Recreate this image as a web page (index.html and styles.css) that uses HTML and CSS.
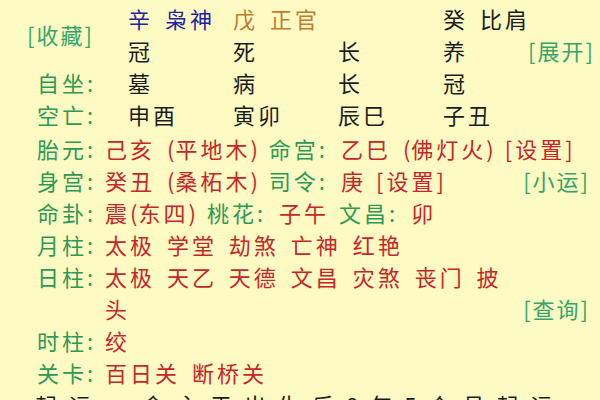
FILE: index.html
```html
<!DOCTYPE html>
<html lang="zh">
<head>
<meta charset="utf-8">
<link rel="stylesheet" href="styles.css">
</head>
<body>
<div class="page">
  <div class="grid">
    <div class="link fav">[收藏]</div>
    <div class="c2 r1 blue">辛 枭神</div>
    <div class="c3 r1 orange">戊 正官</div>
    <div class="c5 r1 ink">癸 比肩</div>

    <div class="c2 r2 ink">冠</div>
    <div class="c3 r2 ink">死</div>
    <div class="c4 r2 ink">长</div>
    <div class="c5 r2 ink">养</div>
    <div class="c6 r2 link">[展开]</div>

    <div class="c1 r3 label">自坐:</div>
    <div class="c2 r3 ink">墓</div>
    <div class="c3 r3 ink">病</div>
    <div class="c4 r3 ink">长</div>
    <div class="c5 r3 ink">冠</div>

    <div class="c1 r4 label">空亡:</div>
    <div class="c2 r4 ink">申酉</div>
    <div class="c3 r4 ink">寅卯</div>
    <div class="c4 r4 ink">辰巳</div>
    <div class="c5 r4 ink">子丑</div>
  </div>

  <div class="lines">
    <div class="line">
      <span class="label lab">胎元:</span>
      <span class="red">己亥 <span class="paren">(</span>平地木<span class="paren">)</span></span>
      <span class="label gap">命宫:</span>
      <span class="red">乙巳 <span class="paren">(</span>佛灯火<span class="paren">)</span></span>
      <span class="red set">[设置]</span>
    </div>
    <div class="line">
      <span class="label lab">身宫:</span>
      <span class="red">癸丑 <span class="paren">(</span>桑柘木<span class="paren">)</span></span>
      <span class="label gap">司令:</span>
      <span class="red">庚</span>
      <span class="red set2">[设置]</span>
      <span class="link right">[小运]</span>
    </div>
    <div class="line">
      <span class="label lab">命卦:</span>
      <span class="red">震<span class="paren">(</span>东四<span class="paren">)</span></span>
      <span class="label gap">桃花:</span>
      <span class="red">子午</span>
      <span class="label gap">文昌:</span>
      <span class="red">卯</span>
    </div>
    <div class="line">
      <span class="label lab">月柱:</span>
      <span class="red">太极 学堂 劫煞 亡神 红艳</span>
    </div>
    <div class="line">
      <span class="label lab">日柱:</span>
      <span class="red">太极 天乙 天德 文昌 灾煞 丧门 披</span>
    </div>
    <div class="line">
      <span class="lab"></span>
      <span class="red">头</span>
      <span class="link right">[查询]</span>
    </div>
    <div class="line">
      <span class="label lab">时柱:</span>
      <span class="red">绞</span>
    </div>
    <div class="line">
      <span class="label lab">关卡:</span>
      <span class="red">百日关 断桥关</span>
    </div>
    <div class="line">
      <span class="ink cut">起运: 命主于出生后8年5个月起运</span>
    </div>
  </div>
</div>
</body>
</html>
```
FILE: styles.css
```css
html, body {
  margin: 0;
  padding: 0;
}
body {
  width: 600px;
  height: 400px;
  overflow: hidden;
  background: #fdfac3;
  font-family: "Noto Sans CJK SC", "Noto Sans", sans-serif;
  font-size: 22px;
  letter-spacing: 3px;
  word-spacing: 4px;
}
.page {
  width: 600px;
}
.grid {
  display: grid;
  grid-template-columns: 128px 105px 105px 105px 85px 1fr;
  grid-template-rows: repeat(4, 32px);
  align-items: center;
  padding-top: 2px;
  white-space: nowrap;
}
.c1 { grid-column: 1; padding-left: 37px; }
.c2 { grid-column: 2; }
.c3 { grid-column: 3; }
.c4 { grid-column: 4; }
.c5 { grid-column: 5; }
.c6 { grid-column: 6; }
.r1 { grid-row: 1; }
.r2 { grid-row: 2; }
.r3 { grid-row: 3; }
.r4 { grid-row: 4; }
.fav {
  grid-column: 1;
  grid-row: 1 / 3;
  padding-left: 27px;
}
.blue { color: #1f23a3; }
.orange { color: #c27a2c; }
.ink { color: #1c1c1c; }
.red { color: #c8262a; }
.label { color: #2c9a55; }
.link { color: #35a66a; letter-spacing: 2px; }
.lines {
  margin-top: 2px;
}
.line {
  display: flex;
  align-items: center;
  height: 32px;
  white-space: pre;
}
.lab {
  width: 68px;
  margin-left: 37px;
  flex: none;
}
.gap {
  margin-left: 10px;
  margin-right: 13px;
}
.paren {
  letter-spacing: 1px;
}
.set {
  margin-left: 10px;
}
.set2 {
  margin-left: 10px;
}
.right {
  margin-left: auto;
  margin-right: 10px;
}
.cut {
  margin-left: 35px;
  letter-spacing: 12px;
}
```
